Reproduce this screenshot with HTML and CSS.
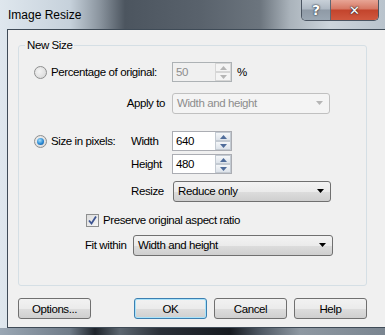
FILE: index.html
```html
<!DOCTYPE html>
<html lang="en">
<head>
    <meta charset="UTF-8">
    <title>Image Resize</title>
    <link rel="stylesheet" href="styles.css">
</head>
<body>
    <div class="window">
        <div class="titlebar">
            <span class="title">Image Resize</span>
            <div class="caption-btns">
                <span class="cap cap-help">?</span>
                <span class="cap cap-close">&#x2715;</span>
            </div>
        </div>
        <div class="client">
            <fieldset class="group">
                <legend>New Size</legend>

                <div class="row row-pct">
                    <label class="opt opt-wide"><span class="radio"></span>Percentage of original:</label>
                    <div class="spin disabled">
                        <span class="spin-value">50</span>
                        <span class="spin-btns">
                            <span class="spin-up"><svg width="7" height="4" viewBox="0 0 7 4"><path d="M0 4 L3.5 0 L7 4 Z"/></svg></span>
                            <span class="spin-down"><svg width="7" height="4" viewBox="0 0 7 4"><path d="M0 0 L7 0 L3.5 4 Z"/></svg></span>
                        </span>
                    </div>
                    <span class="unit">%</span>
                </div>

                <div class="row row-apply">
                    <span class="lbl lbl-right">Apply to</span>
                    <div class="combo disabled combo-apply">
                        <span>Width and height</span>
                        <svg width="7" height="4" viewBox="0 0 7 4"><path d="M0 0 L7 0 L3.5 4 Z"/></svg>
                    </div>
                </div>

                <div class="row row-width">
                    <label class="opt opt-narrow"><span class="radio checked"></span>Size in pixels:</label>
                    <span class="lbl lbl-dim">Width</span>
                    <div class="spin">
                        <span class="spin-value">640</span>
                        <span class="spin-btns">
                            <span class="spin-up"><svg width="7" height="4" viewBox="0 0 7 4"><path d="M0 4 L3.5 0 L7 4 Z"/></svg></span>
                            <span class="spin-down"><svg width="7" height="4" viewBox="0 0 7 4"><path d="M0 0 L7 0 L3.5 4 Z"/></svg></span>
                        </span>
                    </div>
                </div>

                <div class="row row-height">
                    <span class="opt-narrow"></span>
                    <span class="lbl lbl-dim">Height</span>
                    <div class="spin">
                        <span class="spin-value">480</span>
                        <span class="spin-btns">
                            <span class="spin-up"><svg width="7" height="4" viewBox="0 0 7 4"><path d="M0 4 L3.5 0 L7 4 Z"/></svg></span>
                            <span class="spin-down"><svg width="7" height="4" viewBox="0 0 7 4"><path d="M0 0 L7 0 L3.5 4 Z"/></svg></span>
                        </span>
                    </div>
                </div>

                <div class="row row-resize">
                    <span class="opt-narrow"></span>
                    <span class="lbl lbl-dim">Resize</span>
                    <div class="combo combo-resize">
                        <span>Reduce only</span>
                        <svg width="7" height="4" viewBox="0 0 7 4"><path d="M0 0 L7 0 L3.5 4 Z"/></svg>
                    </div>
                </div>

                <div class="row row-check">
                    <span class="checkbox">
                        <svg width="9" height="9" viewBox="0 0 9 9"><path d="M1 4.5 L3.5 7.5 L8 0.5" fill="none" stroke="#3d5492" stroke-width="1.8"/></svg>
                    </span>
                    <span>Preserve original aspect ratio</span>
                </div>

                <div class="row row-fit">
                    <span class="lbl lbl-fit">Fit within</span>
                    <div class="combo combo-fit">
                        <span>Width and height</span>
                        <svg width="7" height="4" viewBox="0 0 7 4"><path d="M0 0 L7 0 L3.5 4 Z"/></svg>
                    </div>
                </div>
            </fieldset>

            <div class="buttons">
                <button class="btn btn-options">Options...</button>
                <button class="btn btn-default">OK</button>
                <button class="btn">Cancel</button>
                <button class="btn">Help</button>
            </div>
        </div>
    </div>
</body>
</html>
```

FILE: styles.css
```css
        html, body {
            margin: 0;
            padding: 0;
        }
        body {
            font-family: "Liberation Sans", Arial, sans-serif;
            font-size: 11.5px;
            letter-spacing: -0.4px;
            white-space: nowrap;
            color: #000;
        }
        .window {
            width: 385px;
            height: 335px;
            overflow: hidden;
            background:
                linear-gradient(90deg, #dfe7ee 0px, #c6d1db 70px, #8a949e 100px, #4c555f 125px, #59626c 200px, #6c757e 260px, #aab3bb 290px, #cdd5dc 330px, #b9c3cc 385px);
            position: relative;
        }
        .window::after {
            content: "";
            position: absolute;
            left: 0;
            right: 0;
            bottom: 0;
            height: 7px;
            background: linear-gradient(90deg, #9aa7b4 0px, #6f7b88 70px, #1e242b 95px, #5c6670 120px, #2a3038 160px, #161a20 230px, #4e5863 260px, #8e98a2 300px, #7a8590 385px);
        }
        .titlebar {
            height: 29px;
            display: flex;
            align-items: flex-start;
            padding-left: 8px;
        }
        .title {
            margin-top: 8px;
            font-size: 12px;
            letter-spacing: 0;
            color: #000;
        }
        .caption-btns {
            margin-left: auto;
            margin-right: 6px;
            display: flex;
            height: 20px;
            border: 1px solid #4b5562;
            border-top: none;
            border-radius: 0 0 5px 5px;
            overflow: hidden;
        }
        .cap {
            display: flex;
            align-items: center;
            justify-content: center;
            color: #fff;
            font-family: "DejaVu Sans", sans-serif;
            font-weight: bold;
            letter-spacing: 0;
            text-shadow: 0 0 2px #1c2430, 0 0 1px #1c2430;
        }
        .cap-help {
            width: 28px;
            font-size: 14px;
            background: linear-gradient(#c8d0d8, #aeb8c3 45%, #8f9aa6 50%, #9aa6b2);
            border-right: 1px solid #5d6773;
        }
        .cap-close {
            width: 47px;
            font-size: 13px;
            background: linear-gradient(#e7a595, #d67763 45%, #c3442c 50%, #d0583f);
        }
        .client {
            margin-left: 7px;
            width: 370px;
            height: 297px;
            background: #f0f0f0;
            border: 1px solid #3f4b57;
            padding-left: 10px;
            box-sizing: content-box;
        }
        .group {
            margin: 8px 0 0 0;
            width: 349px;
            box-sizing: border-box;
            padding: 0 0 30px 0;
            border: 1px solid #d5dfe5;
            border-radius: 3px;
        }
        .group legend {
            margin-left: 6px;
            padding: 0 2px;
            line-height: 14px;
        }
        .row {
            display: flex;
            align-items: center;
            height: 20px;
        }
        .row-pct { margin-top: 10px; }
        .row-apply { margin-top: 11px; }
        .row-width { margin-top: 18px; }
        .row-height { margin-top: 3px; }
        .row-resize { margin-top: 7px; }
        .row-check { margin-top: 10px; padding-left: 67px; height: 18px; }
        .row-fit { margin-top: 6px; }
        .opt {
            display: flex;
            align-items: center;
            padding-left: 15px;
            box-sizing: border-box;
        }
        .opt-wide { width: 153px; }
        .opt-narrow { width: 112px; flex-shrink: 0; }
        .lbl-right {
            width: 146px;
            text-align: right;
            margin-right: 7px;
        }
        .lbl-dim {
            width: 41px;
        }
        .lbl-fit {
            padding-left: 66px;
            width: 48px;
        }
        .radio {
            width: 11px;
            height: 11px;
            border-radius: 50%;
            border: 1px solid #8e8f8f;
            background: radial-gradient(circle at 40% 40%, #f4f4f4, #d4d4d4);
            margin-right: 4px;
            position: relative;
        }
        .radio.checked::after {
            content: "";
            position: absolute;
            left: 2px;
            top: 2px;
            width: 7px;
            height: 7px;
            border-radius: 50%;
            background: radial-gradient(circle at 40% 35%, #a8e0fb, #2a8ad4 55%, #12468a);
        }
        .spin {
            width: 60px;
            height: 20px;
            box-sizing: border-box;
            border: 1px solid #abadb3;
            background: #fff;
            display: flex;
        }
        .spin-value {
            flex: 1;
            padding-left: 3px;
            line-height: 18px;
        }
        .spin-btns {
            width: 16px;
            display: flex;
            flex-direction: column;
        }
        .spin-up, .spin-down {
            flex: 1;
            display: flex;
            align-items: center;
            justify-content: center;
            border: 1px solid #c3cad2;
            background: linear-gradient(#f5f7f9, #dde3ea);
        }
        .spin svg { fill: #4f6c9a; }
        .spin.disabled {
            background: #f0f0f0;
            border-color: #adb2b5;
            color: #8d8d8d;
        }
        .spin.disabled .spin-up, .spin.disabled .spin-down {
            border-color: #d6d6d6;
            background: #f4f4f4;
        }
        .spin.disabled svg { fill: #b5b5b5; }
        .unit {
            margin-left: 5px;
        }
        .combo {
            height: 21px;
            box-sizing: border-box;
            border: 1px solid #707070;
            border-radius: 3px;
            background: linear-gradient(#f3f3f3, #ebebeb 50%, #dddddd 51%, #cfcfcf);
            display: flex;
            align-items: center;
            justify-content: space-between;
            padding: 0 6px 0 4px;
        }
        .combo svg { fill: #000; }
        .combo.disabled {
            background: #f4f4f4;
            border-color: #c0c0c0;
            color: #8d8d8d;
        }
        .combo.disabled svg { fill: #b5b5b5; }
        .combo-apply { width: 158px; }
        .combo-resize { width: 158px; margin-left: 1px; }
        .combo-fit { width: 200px; }
        .checkbox {
            width: 11px;
            height: 11px;
            border: 1px solid #8e8f8f;
            background: linear-gradient(135deg, #dcdcdc, #f6f6f6);
            display: flex;
            align-items: center;
            justify-content: center;
            margin-right: 4px;
        }
        .buttons {
            display: flex;
            margin-top: 12px;
            width: 349px;
            gap: 7px;
        }
        .btn {
            width: 73px;
            height: 21px;
            font-family: "Liberation Sans", Arial, sans-serif;
            font-size: 11.5px;
            letter-spacing: -0.4px;
            color: #000;
            border: 1px solid #707070;
            border-radius: 3px;
            background: linear-gradient(#f2f2f2, #ebebeb 50%, #dddddd 51%, #cfcfcf);
            padding: 0;
        }
        .btn-options {
            margin-right: auto;
        }
        .btn-default {
            border-color: #3c7fb1;
            box-shadow: inset 0 0 0 1px #a9e3fa;
        }
```
